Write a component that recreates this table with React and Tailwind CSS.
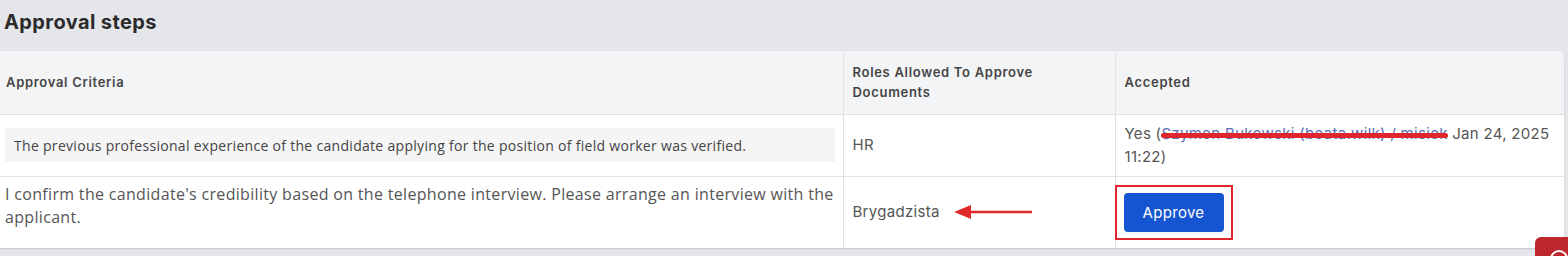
import React from "react";

const steps = [
  {
    criteria:
      "The previous professional experience of the candidate applying for the position of field worker was verified.",
    boxed: true,
    role: "HR",
    accepted: {
      who: "Szymon Bukowski (beata.wilk) / misiek",
      date: "Jan 24, 2025",
      time: "11:22",
    },
  },
  {
    criteria:
      "I confirm the candidate's credibility based on the telephone interview. Please arrange an interview with the applicant.",
    boxed: false,
    role: "Brygadzista",
    accepted: null,
  },
];

const ArrowLeft = () => (
  <svg width="80" height="16" viewBox="0 0 80 16" className="ml-[14px]">
    <line x1="14" y1="8" x2="78" y2="8" stroke="#e02a2a" strokeWidth="2.5" />
    <polygon points="0,8 17,1 17,15" fill="#e02a2a" />
  </svg>
);

const App = () => {
  return (
    <div
      className="w-[1568px] h-[256px] bg-[#e5e6e9] overflow-hidden relative"
      style={{ fontFamily: "Inter, 'Open Sans', sans-serif" }}
    >
      {/* Title */}
      <div className="h-[51px] flex items-center pl-1">
        <h2 className="text-[20px] font-bold tracking-[0.4px] text-[#2b2b2b] pb-2">Approval steps</h2>
      </div>

      {/* Table */}
      <div className="w-[1564px] bg-white rounded-tr-md shadow-[0_1px_2px_rgba(0,0,0,0.15)] overflow-hidden">
        <table className="w-full border-collapse table-fixed">
          <colgroup>
            <col className="w-[843px]" />
            <col className="w-[272px]" />
            <col />
          </colgroup>
          <thead>
            <tr className="h-[63px] bg-[#f3f4f6] text-[13px] tracking-[0.7px] text-[#454545] text-left">
              <th className="px-[6px] font-semibold">Approval Criteria</th>
              <th className="px-[9px] font-semibold border-l border-[#dfe1e5] leading-[20px]">
                <div className="w-[200px]">Roles Allowed To Approve Documents</div>
              </th>
              <th className="px-[9px] font-semibold border-l border-[#dfe1e5]">Accepted</th>
            </tr>
          </thead>
          <tbody>
            {steps.map((s, i) => (
              <tr
                key={i}
                className={`border-t border-[#dfe1e5] ${i === 0 ? "h-[62px]" : "h-[72px]"}`}
              >
                <td className="pl-[5px] pr-[8px] align-middle">
                  {s.boxed ? (
                    <div
                      className="bg-[#f5f5f6] h-[34px] flex items-center px-[9px] text-[14px] tracking-[0.3px] text-[#444]"
                      style={{ fontFamily: "'Open Sans', sans-serif" }}
                    >
                      {s.criteria}
                    </div>
                  ) : (
                    <p
                      className="text-[16px] leading-[23px] tracking-[0.32px] text-[#555] -mr-[7px] pb-3"
                      style={{ fontFamily: "'Open Sans', sans-serif" }}
                    >
                      {s.criteria}
                    </p>
                  )}
                </td>
                <td className="px-[9px] border-l border-[#dfe1e5] text-[15px] tracking-[0.3px] text-[#555]">
                  {s.role === "Brygadzista" ? (
                    <div className="flex items-center">
                      <span>{s.role}</span>
                      <ArrowLeft />
                    </div>
                  ) : (
                    s.role
                  )}
                </td>
                <td className="px-[9px] border-l border-[#dfe1e5] text-[15px] tracking-[0.3px] text-[#555] leading-[23px]">
                  {s.accepted ? (
                    <span>
                      Yes (
                      <span className="relative text-[#5a6fb5]">
                        {s.accepted.who}
                        <span className="absolute left-0 right-0 top-[9px] h-[5px] bg-[#e0262c] rounded-full" />
                      </span>{" "}
                      {s.accepted.date} {s.accepted.time})
                    </span>
                  ) : (
                    <div className="inline-block -ml-[10px] border-2 border-[#e0262c] px-[7px] py-[6px]">
                      <button className="bg-[#1655d2] text-white text-[15px] tracking-[0.3px] w-[100px] h-[39px] rounded">
                        Approve
                      </button>
                    </div>
                  )}
                </td>
              </tr>
            ))}
          </tbody>
        </table>
      </div>

      {/* Chat launcher peeking in */}
      <div className="absolute left-[1535px] top-[237px] w-[40px] h-[30px] bg-[#c0262d] rounded-tl-md">
        <div className="absolute left-[15px] top-[13px] w-[18px] h-[18px] rounded-full border-2 border-white" />
      </div>
    </div>
  );
};

export default App;
